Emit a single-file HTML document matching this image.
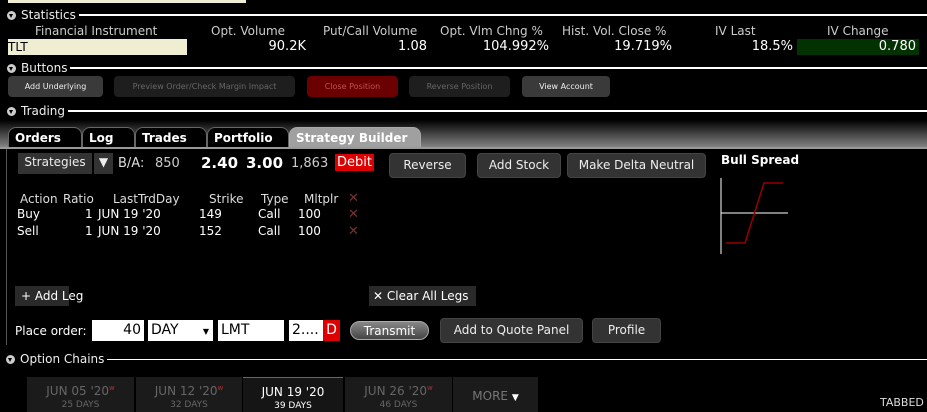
<!DOCTYPE html>
<html><head><style>
body{margin:0;width:927px;height:412px;background:#000;position:relative;overflow:hidden;font-family:"DejaVu Sans","Liberation Sans",sans-serif;color:#fff}
div,span{position:absolute;box-sizing:border-box;white-space:nowrap}
.sh{left:7px;right:0;height:16px;display:flex;align-items:center;z-index:2}
.sh>*{position:static}
.sh b{font-weight:normal;font-size:12px;color:#eee;margin:0 3px 0 5px}
.sh i{flex:1;height:2px;background:#fff}
.circ{width:9px;height:9px;border-radius:50%;background:#ccc;position:relative!important;flex:none}
.circ:after{content:"";position:absolute;left:2px;top:3px;border-left:2.5px solid transparent;border-right:2.5px solid transparent;border-top:4px solid #000}
.hd{font-size:12px;color:#ccc;top:24px}
.v{font-size:13px;color:#fff;top:39px;text-align:right}
.b1{height:21px;top:76px;border-radius:4px;background:#3a3a3a;font-size:8px;color:#eee;text-align:center;line-height:21px}
.btn{background:#333;border-radius:4px;font-size:12px;color:#eee;text-align:center;border:1px solid #444}
.tab{top:127px;height:22px;border:1px solid #666;border-bottom:none;border-radius:8px 8px 0 0;font-weight:bold;font-size:12px;padding-left:6px;line-height:20px;background:#000}
.t{font-size:12px;color:#ddd}
.inp{background:#fff;color:#000;font-size:14px;top:320px;height:21px;line-height:21px}
.et{top:377px;height:35px;background:#1b1b1b;text-align:center;font-size:12px;color:#666}
.et small{display:block;font-size:9px;margin-top:2px}
</style></head><body>
<div style="left:8px;top:0;width:238px;height:3px;background:#efeed2"></div>

<div class="sh" style="top:7px"><span class="circ"></span><b>Statistics</b><i></i></div>
<div class="hd" style="left:35px">Financial Instrument</div>
<div class="hd" style="left:211px">Opt. Volume</div>
<div class="hd" style="left:323px">Put/Call Volume</div>
<div class="hd" style="left:440px">Opt. Vlm Chng %</div>
<div class="hd" style="left:562px">Hist. Vol. Close %</div>
<div class="hd" style="left:715px">IV Last</div>
<div class="hd" style="left:827px">IV Change</div>
<div style="left:8px;top:39px;width:179px;height:16px;background:#efeed2;color:#000;font-size:12px;line-height:16px">TLT</div>
<div class="v" style="left:200px;width:106px">90.2K</div>
<div class="v" style="left:330px;width:97px">1.08</div>
<div class="v" style="left:440px;width:109px">104.992%</div>
<div class="v" style="left:560px;width:112px">19.719%</div>
<div class="v" style="left:700px;width:93px">18.5%</div>
<div style="left:797px;top:39px;width:122px;height:16px;background:#023202"></div>
<div class="v" style="left:797px;width:119px">0.780</div>

<div class="sh" style="top:60px"><span class="circ"></span><b>Buttons</b><i></i></div>
<div class="b1" style="left:8px;width:95px">Add Underlying</div>
<div class="b1" style="left:114px;width:181px;background:#1e1e1e;color:#666">Preview Order/Check Margin Impact</div>
<div class="b1" style="left:307px;width:91px;background:#6b0000;color:#b55">Close Position</div>
<div class="b1" style="left:409px;width:101px;background:#1e1e1e;color:#666">Reverse Position</div>
<div class="b1" style="left:522px;width:88px">View Account</div>

<div style="left:0;top:113px;width:927px;height:35px;background:linear-gradient(#000,#000 20%,#888)"></div>
<div class="sh" style="top:103px"><span class="circ"></span><b>Trading</b><i></i></div>
<div class="tab" style="left:8px;width:74px">Orders</div>
<div class="tab" style="left:82px;width:53px">Log</div>
<div class="tab" style="left:135px;width:72px">Trades</div>
<div class="tab" style="left:207px;width:82px">Portfolio</div>
<div class="tab" style="left:289px;width:132px;background:#a0a0a0;color:#fff;border-color:#aaa">Strategy Builder</div>
<div style="left:0;top:147px;width:927px;height:2px;background:#999"></div>
<div style="left:6px;top:149px;width:1px;height:196px;background:#555"></div>

<div class="btn" style="left:18px;top:153px;width:74px;height:21px;line-height:19px;border:none;border-radius:0">Strategies</div>
<div class="btn" style="left:94px;top:153px;width:19px;height:21px;line-height:19px;border:none;border-radius:0">▼</div>
<div class="t" style="left:118px;top:156px;font-size:13px">B/A:</div>
<div class="t" style="left:155px;top:156px;font-size:13px;color:#ccc">850</div>
<div style="left:201px;top:154px;font-size:15px;font-weight:bold">2.40</div>
<div style="left:246px;top:154px;font-size:15px;font-weight:bold">3.00</div>
<div class="t" style="left:291px;top:156px;font-size:13px;color:#ccc">1,863</div>
<div style="left:335px;top:154px;width:39px;height:17px;background:#d00;font-size:13px;line-height:17px;text-align:center">Debit</div>
<div class="btn" style="left:389px;top:153px;width:77px;height:25px;line-height:23px">Reverse</div>
<div class="btn" style="left:477px;top:153px;width:84px;height:25px;line-height:23px">Add Stock</div>
<div class="btn" style="left:567px;top:153px;width:139px;height:25px;line-height:23px">Make Delta Neutral</div>
<div style="left:721px;top:153px;font-size:12px;font-weight:bold">Bull Spread</div>
<svg style="position:absolute;left:715px;top:175px" width="80" height="80"><path d="M6 3V79M6 38H73" stroke="#fff" stroke-width="1"/><path d="M11 68H30L49 8H68" stroke="#900" stroke-width="1.5" fill="none"/></svg>

<div class="t" style="left:20px;top:192px">Action</div>
<div class="t" style="left:63px;top:192px">Ratio</div>
<div class="t" style="left:113px;top:192px">LastTrdDay</div>
<div class="t" style="left:209px;top:192px">Strike</div>
<div class="t" style="left:261px;top:192px">Type</div>
<div class="t" style="left:304px;top:192px">Mltplr</div>
<div style="left:348px;top:191px;font-size:13px;color:#733;font-weight:bold">✕</div>
<div class="t" style="left:17px;top:207px;color:#fff">Buy</div>
<div class="t" style="left:85px;top:207px;color:#fff">1</div>
<div class="t" style="left:98px;top:207px;color:#fff">JUN 19 '20</div>
<div class="t" style="left:199px;top:207px;color:#fff">149</div>
<div class="t" style="left:258px;top:207px;color:#fff">Call</div>
<div class="t" style="left:298px;top:207px;color:#fff">100</div>
<div style="left:348px;top:207px;font-size:13px;color:#733;font-weight:bold">✕</div>
<div class="t" style="left:17px;top:224px;color:#fff">Sell</div>
<div class="t" style="left:85px;top:224px;color:#fff">1</div>
<div class="t" style="left:98px;top:224px;color:#fff">JUN 19 '20</div>
<div class="t" style="left:199px;top:224px;color:#fff">152</div>
<div class="t" style="left:258px;top:224px;color:#fff">Call</div>
<div class="t" style="left:298px;top:224px;color:#fff">100</div>
<div style="left:348px;top:224px;font-size:13px;color:#733;font-weight:bold">✕</div>

<div style="left:15px;top:286px;width:54px;height:20px;background:#2a2a2a;font-size:12px;line-height:20px;padding-left:6px">+ Add Leg</div>
<div style="left:369px;top:286px;width:107px;height:20px;background:#2a2a2a;font-size:12px;line-height:20px;padding-left:4px">✕ Clear All Legs</div>

<div class="t" style="left:15px;top:324px;color:#fff">Place order:</div>
<div class="inp" style="left:92px;width:52px;text-align:right;padding-right:3px">40</div>
<div class="inp" style="left:148px;width:65px;padding-left:3px">DAY<span style="right:4px;font-size:8px;top:1px">▼</span></div>
<div class="inp" style="left:218px;width:66px;padding-left:3px">LMT</div>
<div class="inp" style="left:289px;width:35px;padding-left:3px">2....</div>
<div class="inp" style="left:323px;width:17px;background:#d00;color:#fff;text-align:center">D</div>
<div style="left:350px;top:321px;width:79px;height:19px;border-radius:10px;background:linear-gradient(#888,#444);border:1px solid #aaa;font-size:12px;text-align:center;line-height:18px">Transmit</div>
<div class="btn" style="left:440px;top:318px;width:143px;height:25px;line-height:23px">Add to Quote Panel</div>
<div class="btn" style="left:592px;top:318px;width:69px;height:25px;line-height:23px">Profile</div>

<div class="sh" style="top:351px;left:6px"><span class="circ"></span><b>Option Chains</b><i style="height:1px"></i></div>
<div class="et" style="left:27px;width:107px;padding-top:7px">JUN 05 '20<sup style="color:#a33;font-size:7px">w</sup><small>25 DAYS</small></div>
<div class="et" style="left:136px;width:106px;padding-top:7px">JUN 12 '20<sup style="color:#a33;font-size:7px">w</sup><small>32 DAYS</small></div>
<div class="et" style="left:243px;width:100px;padding-top:7px;background:#151515;color:#fff;border-top:1px solid #666">JUN 19 '20<small>39 DAYS</small></div>
<div class="et" style="left:345px;width:107px;padding-top:7px">JUN 26 '20<sup style="color:#a33;font-size:7px">w</sup><small>46 DAYS</small></div>
<div class="et" style="left:453px;width:85px;padding-top:12px;color:#777">MORE <span style="position:static;color:#fff;font-size:9px">▼</span></div>
<div style="left:880px;top:396px;font-size:11px;color:#ddd">TABBED</div>
</body></html>
